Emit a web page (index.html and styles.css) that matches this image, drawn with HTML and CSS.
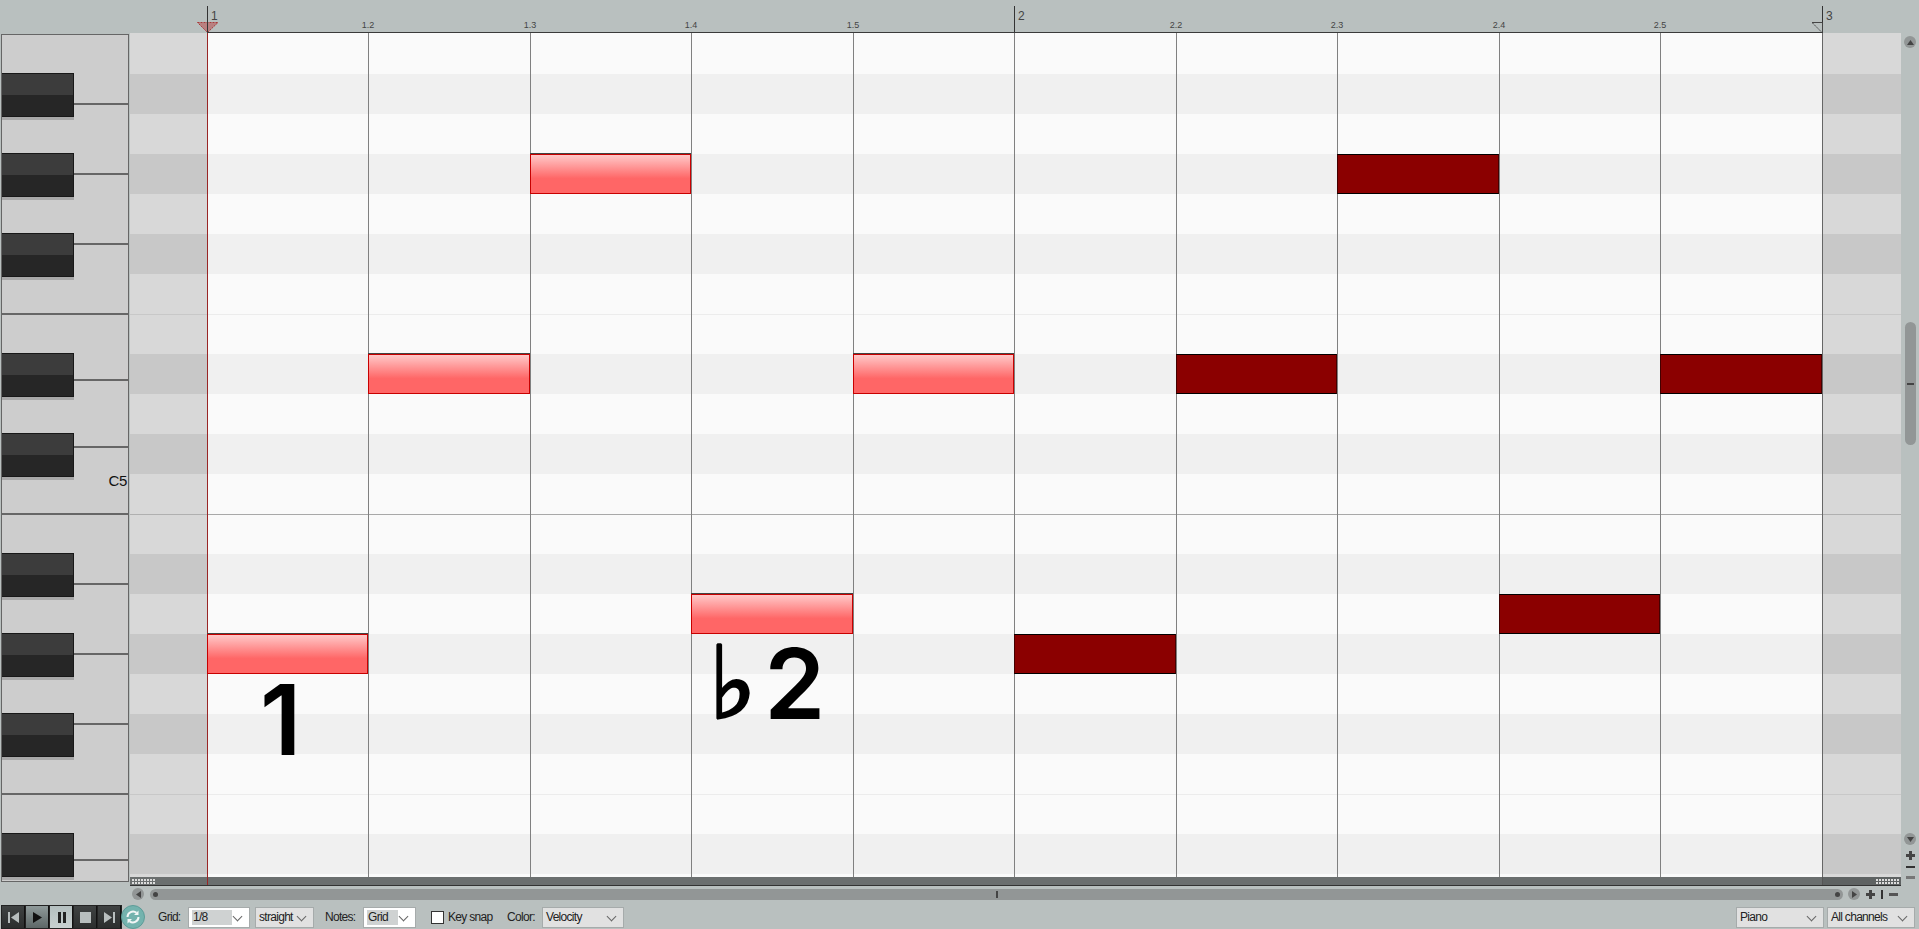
FILE: index.html
```html
<!DOCTYPE html>
<html lang="en">
<head>
    <meta charset="UTF-8">
    <meta name="viewport" content="width=device-width, initial-scale=1.0">
    <title>MIDI Editor</title>
    <link rel="stylesheet" href="styles.css">
</head>
<body>
    <!-- Timeline ruler -->
    <div class="ruler">
        <div class="bar-mark first"><span>1</span></div>
        <div class="beat-mark"><span>1.2</span></div>
        <div class="beat-mark"><span>1.3</span></div>
        <div class="beat-mark"><span>1.4</span></div>
        <div class="beat-mark"><span>1.5</span></div>
        <div class="bar-mark"><span>2</span></div>
        <div class="beat-mark"><span>2.2</span></div>
        <div class="beat-mark"><span>2.3</span></div>
        <div class="beat-mark"><span>2.4</span></div>
        <div class="beat-mark"><span>2.5</span></div>
        <div class="bar-mark last"><span>3</span></div>
        <svg class="marker marker-start" width="22" height="11" viewBox="0 0 22 11">
            <path d="M0.5 0.5H21L10.5 10.5Z" fill="#b98080" stroke="#a83a3a" stroke-dasharray="2 1"/>
            <path d="M10.500 0V11" fill="none" stroke="#333"/>
        </svg>
        <svg class="marker marker-end" width="11" height="11" viewBox="0 0 11 11">
            <path d="M0 0.5H10.5V10.5" fill="none" stroke="#444"/>
            <path d="M0.5 1L10 10.5" fill="none" stroke="#444" stroke-dasharray="2 1"/>
        </svg>
    </div>

    <div class="editor">
        <!-- Piano keys -->
        <div class="keyboard">
            <div class="white-keys">
                <div class="white-key"></div>
                <div class="white-key"></div>
                <div class="white-key"></div>
                <div class="white-key"></div>
                <div class="white-key short"></div>
                <div class="white-key mid"></div>
                <div class="white-key mid"><span class="key-name">C5</span></div>
                <div class="white-key"></div>
                <div class="white-key"></div>
                <div class="white-key"></div>
                <div class="white-key"></div>
                <div class="white-key short"></div>
                <div class="white-key last"></div>
            </div>
            <div class="black-keys">
                <div class="black-key k2"><i></i></div>
                <div class="black-key k4"><i></i></div>
                <div class="black-key k6"><i></i></div>
                <div class="black-key k9"><i></i></div>
                <div class="black-key k11"><i></i></div>
                <div class="black-key k14"><i></i></div>
                <div class="black-key k16"><i></i></div>
                <div class="black-key k18"><i></i></div>
                <div class="black-key k21"><i></i></div>
            </div>
        </div>

        <div class="lanes">
            <div class="lane-row">
                <!-- Left gutter -->
                <div class="stripes gutter">
                    <div class="row first"></div><div class="row dark"></div><div class="row"></div><div class="row dark"></div>
                    <div class="row"></div><div class="row dark"></div><div class="row"></div><div class="row octave"></div>
                    <div class="row dark"></div><div class="row"></div><div class="row dark"></div><div class="row"></div>
                    <div class="row middle-c"></div><div class="row dark"></div><div class="row"></div><div class="row dark"></div>
                    <div class="row"></div><div class="row dark"></div><div class="row"></div><div class="row octave"></div>
                    <div class="row dark"></div><div class="row tail"></div>
                </div>

                <!-- Note area -->
                <div class="roll">
                    <div class="stripes">
                        <div class="row first"></div><div class="row dark"></div><div class="row"></div><div class="row dark"></div>
                        <div class="row"></div><div class="row dark"></div><div class="row"></div><div class="row octave"></div>
                        <div class="row dark"></div><div class="row"></div><div class="row dark"></div><div class="row"></div>
                        <div class="row middle-c"></div><div class="row dark"></div><div class="row"></div><div class="row dark"></div>
                        <div class="row"></div><div class="row dark"></div><div class="row"></div><div class="row octave"></div>
                        <div class="row dark"></div><div class="row tail"></div>
                    </div>
                    <div class="notes">
                        <div class="note selected c1 r16"></div>
                        <div class="note selected c2 r9"></div>
                        <div class="note selected c3 r4"></div>
                        <div class="note selected c4 r15"></div>
                        <div class="note selected c5 r9"></div>
                        <div class="note c6 r16"></div>
                        <div class="note c7 r9"></div>
                        <div class="note c8 r4"></div>
                        <div class="note c9 r15"></div>
                        <div class="note c10 r9"></div>
                        <div class="degree degree-one">1</div>
                        <div class="degree degree-two"><span class="flat">♭</span>2</div>
                    </div>
                </div>

                <!-- Right gutter -->
                <div class="stripes gutter">
                    <div class="row first"></div><div class="row dark"></div><div class="row"></div><div class="row dark"></div>
                    <div class="row"></div><div class="row dark"></div><div class="row"></div><div class="row octave"></div>
                    <div class="row dark"></div><div class="row"></div><div class="row dark"></div><div class="row"></div>
                    <div class="row middle-c"></div><div class="row dark"></div><div class="row"></div><div class="row dark"></div>
                    <div class="row"></div><div class="row dark"></div><div class="row"></div><div class="row octave"></div>
                    <div class="row dark"></div><div class="row tail"></div>
                </div>
            </div>

            <!-- CC lane divider -->
            <div class="divider">
                <div class="grip"></div>
                <div class="divider-mark"></div>
                <div class="divider-end"><div class="grip"></div></div>
            </div>
        </div>

        <!-- Vertical scrollbar -->
        <div class="vscroll">
            <div class="round-btn up"><svg width="7" height="5" viewBox="0 0 7 5"><path d="M3.5 0L7 5H0Z"/></svg></div>
            <div class="vthumb"><i></i></div>
            <div class="round-btn down"><svg width="7" height="5" viewBox="0 0 7 5"><path d="M0 0H7L3.5 5Z"/></svg></div>
            <div class="zoom-plus"></div>
            <div class="zoom-minus"></div>
            <div class="zoom-minus pale"></div>
        </div>
    </div>

    <!-- Horizontal scrollbar -->
    <div class="hscroll">
        <div class="round-btn"><svg width="5" height="7" viewBox="0 0 5 7"><path d="M5 0V7L0 3.5Z"/></svg></div>
        <div class="hthumb"><b></b><i></i><b></b></div>
        <div class="round-btn"><svg width="5" height="7" viewBox="0 0 5 7"><path d="M0 0V7L5 3.5Z"/></svg></div>
        <div class="hzoom">
            <div class="zoom-plus"></div>
            <div class="zoom-bar"></div>
            <div class="zoom-minus"></div>
        </div>
    </div>

    <!-- Bottom toolbar -->
    <div class="toolbar">
        <div class="transport">
            <div class="tbtn"><svg width="13" height="13" viewBox="0 0 13 13"><path d="M1 1h2v11H1zM12 1v11L4 6.500z"/></svg></div>
            <div class="tbtn play"><svg width="13" height="13" viewBox="0 0 13 13"><path d="M2 1v11l9-5.500z"/></svg></div>
            <div class="tbtn pause"><svg width="13" height="13" viewBox="0 0 13 13"><path d="M3 1h3v11H3zM8 1h3v11H8z"/></svg></div>
            <div class="tbtn"><svg width="13" height="13" viewBox="0 0 13 13"><path d="M1 1h11v11H1z"/></svg></div>
            <div class="tbtn"><svg width="13" height="13" viewBox="0 0 13 13"><path d="M1 1v11l8-5.500zM10 1h2v11h-2z"/></svg></div>
        </div>
        <div class="loop">
            <svg width="24" height="24" viewBox="0 0 24 24">
                <circle cx="12" cy="12" r="11.500" fill="#74b3ae" stroke="#5d9c98"/>
                <path d="M6.500 12a5.500 5.500 0 0 1 9-4.200M17.500 12a5.500 5.500 0 0 1-9 4.200" fill="none" stroke="#f2f6f6" stroke-width="2"/>
                <path d="M17.500 5.500v4.500h-4.500zM6.500 18.500v-4.500h4.500z" fill="#f2f6f6"/>
            </svg>
        </div>
        <span class="label label-grid">Grid:</span>
        <div class="combo white combo-grid"><span class="combo-sel">1/8</span></div>
        <div class="combo combo-swing">straight</div>
        <span class="label label-notes">Notes:</span>
        <div class="combo white combo-notes"><span class="combo-sel">Grid</span></div>
        <label class="keysnap"><span class="checkbox"></span>Key snap</label>
        <span class="label label-color">Color:</span>
        <div class="combo combo-color">Velocity</div>
        <div class="spacer"></div>
        <div class="combo combo-piano">Piano</div>
        <div class="combo combo-channels">All channels</div>
    </div>
</body>
</html>
```

FILE: styles.css
```css
* {
    margin: 0;
    padding: 0;
    box-sizing: border-box;
}

body {
    width: 1919px;
    height: 929px;
    overflow: hidden;
    background-color: #b9c0bf;
    font-family: "Liberation Sans", Arial, sans-serif;
    color: #222;
}

/* Ruler */
.ruler {
    position: relative;
    height: 33px;
    padding-left: 207px;
    display: grid;
    grid-template-columns: repeat(5, 161px 162px) 1fr;
}

.ruler::after {
    content: "";
    position: absolute;
    left: 207px;
    width: 1615px;
    bottom: 0;
    height: 1px;
    background-color: #3a3a3a;
}

.beat-mark {
    font-size: 9px;
    color: #444;
    padding-top: 21px;
    line-height: 9px;
}

.beat-mark span {
    display: block;
    width: 20px;
    margin-left: -10px;
    text-align: center;
}

.bar-mark {
    margin-top: 6px;
    border-left: 1px solid #333;
    padding-left: 3px;
    padding-top: 4px;
    font-size: 12px;
    line-height: 12px;
    color: #444;
}

.marker {
    position: absolute;
    bottom: 0;
    display: block;
}

.marker-start {
    left: 197px;
}

.marker-end {
    left: 1812px;
}

/* Editor body */
.editor {
    display: flex;
    height: 853px;
}

.keyboard {
    width: 128px;
    height: 848px;
    margin: 1px 1px 0 1px;
    border: 1px solid #666;
    background-color: #cdcdcd;
    display: grid;
    flex-shrink: 0;
}

.white-keys,
.black-keys {
    grid-area: 1 / 1;
}

.white-key {
    height: 70px;
    border-bottom: 2px solid #666;
    display: flex;
    justify-content: flex-end;
    align-items: flex-start;
}

.white-key.short {
    height: 66px;
}

.white-key.mid {
    height: 67px;
}

.white-key.last {
    height: 21px;
    border-bottom: 0;
}

.key-name {
    font-size: 15px;
    line-height: 15px;
    margin: 25px 1px 0 0;
    letter-spacing: -0.3px;
    color: #111;
}

.black-keys {
    display: grid;
    grid-template-rows: repeat(21, 40px);
    width: 72px;
}

.black-key {
    height: 44px;
    margin-top: -2px;
    background-color: #262626;
    border: 1px solid #181818;
    border-left: 0;
    box-shadow: 0 3px 0 #a8a8a8;
}

.black-key i {
    display: block;
    height: 21px;
    background-color: #3c3c3c;
}

.k2 { grid-row: 2; }
.k4 { grid-row: 4; }
.k6 { grid-row: 6; }
.k9 { grid-row: 9; }
.k11 { grid-row: 11; }
.k14 { grid-row: 14; }
.k16 { grid-row: 16; }
.k18 { grid-row: 18; }
.k21 { grid-row: 21; }

/* Lanes */
.lanes {
    width: 1771px;
    display: flex;
    flex-direction: column;
}

.lane-row {
    display: flex;
    height: 844px;
}

.stripes {
    display: flex;
    flex-direction: column;
    grid-area: 1 / 1;
}

.row {
    height: 40px;
    background-color: #fafafa;
}

.row.first {
    height: 41px;
}

.row.tail {
    height: 3px;
}

.row.dark {
    background-color: #f0f0f0;
}

.row.octave {
    border-top: 1px solid #ececec;
}

.row.middle-c {
    border-top: 1px solid #a8a8a8;
}

.gutter {
    width: 77px;
}

.gutter:last-child {
    width: 78px;
}

.gutter .row {
    background-color: #d8d8d8;
}

.gutter .row.dark {
    background-color: #c8c8c8;
}

.gutter .row.octave {
    border-top-color: #c8c8c8;
}

.gutter .row.middle-c {
    border-top-color: #b0b0b0;
}

.roll {
    width: 1616px;
    display: grid;
}

.notes {
    grid-area: 1 / 1;
    display: grid;
    grid-template-columns: repeat(5, 161px 162px);
    grid-template-rows: 41px repeat(20, 40px) 3px;
    border-right: 1px solid #666;
    background-image:
        linear-gradient(#9a2626, #9a2626),
        repeating-linear-gradient(90deg, #808080 0 1px, transparent 1px 161px, #808080 161px 162px, transparent 162px 323px);
    background-size: 1px 100%, 100% 100%;
    background-repeat: no-repeat;
}

.note {
    background-color: #8b0000;
    border-top: 1px solid #000;
    border-bottom: 1px solid #000;
    border-left: 1px solid #400;
    border-right: 1px solid #400;
}

.note.selected {
    background: linear-gradient(#ffc8c8, #ff6666 62%);
    border: 1px solid #c80000;
    box-shadow: 0 -1px 0 #444;
}

.c1 { grid-column: 1; }
.c2 { grid-column: 2; }
.c3 { grid-column: 3; }
.c4 { grid-column: 4; }
.c5 { grid-column: 5; }
.c6 { grid-column: 6; }
.c7 { grid-column: 7; }
.c8 { grid-column: 8; }
.c9 { grid-column: 9; }
.c10 { grid-column: 10; }
.r4 { grid-row: 4; }
.r9 { grid-row: 9; }
.r15 { grid-row: 15; }
.r16 { grid-row: 16; }

/* Big degree labels written over the roll */
.degree {
    font-family: Inter, "Liberation Sans", sans-serif;
    font-weight: 600;
    font-size: 98px;
    line-height: 98px;
    color: #000;
    white-space: nowrap;
}

.degree-one {
    grid-column: 1;
    grid-row: 17;
    margin: -3px 0 0 53px;
}

.degree-two {
    grid-column: 4;
    grid-row: 16;
    margin: 1px 0 0 18px;
    display: flex;
    align-items: flex-start;
}

.flat {
    font-family: "DejaVu Sans", sans-serif;
    font-weight: 400;
    font-size: 100px;
    margin-right: 8px;
    -webkit-text-stroke: 3px #000;
}

/* Divider under the roll */
.divider {
    height: 9px;
    background-color: #6b6f6f;
    border-bottom: 1px solid #333;
    display: flex;
    align-items: center;
}

.grip {
    width: 23px;
    height: 5px;
    margin-left: 2px;
    background-image: repeating-linear-gradient(90deg, #ddd 0 2px, transparent 2px 3px);
    -webkit-mask-image: repeating-linear-gradient(180deg, #000 0 2px, transparent 2px 3px);
    mask-image: repeating-linear-gradient(180deg, #000 0 2px, transparent 2px 3px);
}

.divider-mark {
    width: 1px;
    height: 8px;
    margin-left: 52px;
    background-color: #9a2626;
}

.divider-end {
    margin-left: auto;
    width: 79px;
    height: 8px;
    background-color: #5e6262;
    border-left: 1px solid #555;
    display: flex;
    align-items: center;
    justify-content: flex-end;
    padding-right: 2px;
}

/* Scrollbars */
.round-btn {
    width: 12px;
    height: 12px;
    border-radius: 50%;
    background-color: #929696;
    display: flex;
    align-items: center;
    justify-content: center;
    flex-shrink: 0;
}

.round-btn svg {
    fill: #444;
}

.vscroll {
    width: 18px;
    display: flex;
    flex-direction: column;
    align-items: center;
    padding-top: 3px;
}

.vthumb {
    width: 11px;
    height: 123px;
    margin-top: 274px;
    border-radius: 6px;
    background-color: #929696;
    display: flex;
    align-items: center;
    justify-content: center;
}

.vthumb i {
    display: block;
    width: 7px;
    height: 2px;
    background-color: #444;
}

.vscroll .down {
    margin-top: 388px;
}

.zoom-plus {
    width: 9px;
    height: 9px;
    background:
        linear-gradient(#444, #444) center / 9px 3px no-repeat,
        linear-gradient(#444, #444) center / 3px 9px no-repeat;
}

.vscroll .zoom-plus {
    margin-top: 6px;
}

.zoom-minus {
    width: 9px;
    height: 2px;
    background-color: #333;
}

.vscroll .zoom-minus {
    margin-top: 6px;
}

.vscroll .zoom-minus.pale {
    margin-top: 8px;
    height: 3px;
    background-color: #777;
}

.hscroll {
    height: 19px;
    display: flex;
    align-items: center;
    padding: 0 0 3px 132px;
}

.hthumb {
    width: 1693px;
    height: 11px;
    margin: 0 5px 0 6px;
    border-radius: 6px;
    background-color: #929696;
    display: flex;
    align-items: center;
    justify-content: space-between;
    padding: 0 3px;
}

.hthumb b {
    display: block;
    width: 5px;
    height: 5px;
    border-radius: 50%;
    background-color: #444;
}

.hthumb i {
    display: block;
    width: 2px;
    height: 7px;
    background-color: #444;
}

.hzoom {
    display: flex;
    align-items: center;
    gap: 6px;
    margin-left: 6px;
}

.zoom-bar {
    width: 2px;
    height: 9px;
    background-color: #333;
}

.hzoom .zoom-minus {
    height: 3px;
    background-color: #555;
}

/* Toolbar */
.toolbar {
    height: 24px;
    display: flex;
    align-items: center;
    padding-left: 1px;
    font-size: 12px;
    letter-spacing: -0.7px;
    color: #222;
}

.transport {
    display: flex;
    gap: 1px;
    padding: 1px;
    height: 24px;
    background-color: #222;
    width: 121px;
}

.tbtn {
    flex: 1;
    display: flex;
    align-items: center;
    justify-content: center;
    background: linear-gradient(#3f4242, #2c2e2e);
    fill: #b8bebe;
    border-right: 1px solid #111;
}

.tbtn.play {
    background: linear-gradient(#8f9a9a, #5c6666);
    fill: #111;
}

.tbtn.pause {
    background: linear-gradient(#b4bfbf, #c8d0d0);
    fill: #222;
}

.loop {
    width: 24px;
    height: 24px;
    margin-left: -1px;
}

.loop svg {
    display: block;
}

.label {
    flex-shrink: 0;
}

.label-grid {
    width: 23px;
    margin-left: 13px;
}

.label-notes {
    width: 31px;
    margin-left: 11px;
}

.label-color {
    width: 27px;
    margin-left: 16px;
}

.combo {
    position: relative;
    height: 21px;
    line-height: 19px;
    padding-left: 3px;
    background-color: #e1e1e1;
    border: 1px solid #a6abab;
    flex-shrink: 0;
}

.combo.white {
    background-color: #fff;
}

.combo::after {
    content: "";
    position: absolute;
    right: 8px;
    top: 5px;
    width: 6px;
    height: 6px;
    border-right: 1px solid #666;
    border-bottom: 1px solid #666;
    transform: rotate(45deg);
}

.combo-sel {
    display: block;
    height: 15px;
    line-height: 15px;
    margin-top: 2px;
    background-color: #cfd2d2;
    width: 40px;
    padding-left: 1px;
}

.combo-grid {
    width: 62px;
    margin-left: 7px;
}

.combo-swing {
    width: 59px;
    margin-left: 5px;
}

.combo-notes {
    width: 53px;
    margin-left: 7px;
}

.combo-notes .combo-sel {
    width: 31px;
}

.combo-color {
    width: 82px;
    margin-left: 8px;
}

.combo-piano {
    width: 88px;
}

.combo-channels {
    width: 88px;
    margin: 0 4px 0 3px;
}

.keysnap {
    display: flex;
    align-items: center;
    width: 60px;
    margin-left: 15px;
    white-space: nowrap;
}

.checkbox {
    width: 13px;
    height: 13px;
    background-color: #fff;
    border: 1px solid #333;
    margin-right: 4px;
    flex-shrink: 0;
}

.spacer {
    flex: 1;
}
```
